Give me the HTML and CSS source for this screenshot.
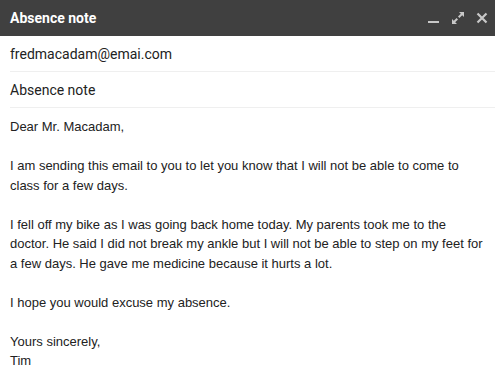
FILE: index.html
```html
<!DOCTYPE html>
<html>
<head>
<meta charset="utf-8">
<link rel="stylesheet" href="styles.css">
</head>
<body>
<div class="compose">
  <div class="titlebar">
    <span class="title">Absence note</span>
    <div class="controls">
      <svg class="icon" width="14" height="14" viewBox="0 0 14 14"><rect x="1" y="10" width="11" height="2" fill="#c8c8c8"/></svg>
      <svg class="icon" width="14" height="14" viewBox="0 0 14 14"><path d="M8 1h5v5l-1.8-1.8-2.8 2.8-1.4-1.4 2.8-2.8z M6 13H1V8l1.8 1.8 2.8-2.8 1.4 1.4-2.8 2.8z" fill="#c8c8c8"/></svg>
      <svg class="icon" width="14" height="14" viewBox="0 0 14 14"><path d="M2.5 2.5l9 9M11.5 2.5l-9 9" stroke="#c8c8c8" stroke-width="2.2"/></svg>
    </div>
  </div>
  <div class="field">fredmacadam@emai.com</div>
  <div class="field">Absence note</div>
  <div class="body">
    <p>Dear Mr. Macadam,</p>
    <p>I am sending this email to you to let you know that I will not be able to come to class for a few days.</p>
    <p>I fell off my bike as I was going back home today. My parents took me to the doctor. He said I did not break my ankle but I will not be able to step on my feet for a few days. He gave me medicine because it hurts a lot.</p>
    <p>I hope you would excuse my absence.</p>
    <p>Yours sincerely,<br>Tim</p>
  </div>
</div>
</body>
</html>
```
FILE: styles.css
```css
html, body {
  margin: 0;
  padding: 0;
  background: #fff;
}
.compose {
  width: 495px;
  height: 385px;
  overflow: hidden;
}
.titlebar {
  height: 36px;
  background: #404040;
  display: flex;
  align-items: center;
  justify-content: space-between;
  padding: 0 6px 0 10px;
}
.title {
  font-family: Roboto, "Liberation Sans", sans-serif;
  font-weight: 700;
  font-size: 14px;
  color: #fff;
}
.controls {
  display: flex;
  gap: 10px;
  align-items: center;
}
.icon {
  display: block;
}
.field {
  margin-left: 10px;
  height: 35px;
  border-bottom: 1px solid #efefef;
  display: flex;
  align-items: center;
  font-family: Roboto, "Liberation Sans", sans-serif;
  font-size: 14px;
  color: #222;
}
.body {
  padding: 9px 10px 0 10px;
  font-family: "Liberation Sans", Arial, sans-serif;
  font-size: 13px;
  line-height: 19.5px;
  color: #222;
}
.body p {
  margin: 0 0 19.5px 0;
}
```
